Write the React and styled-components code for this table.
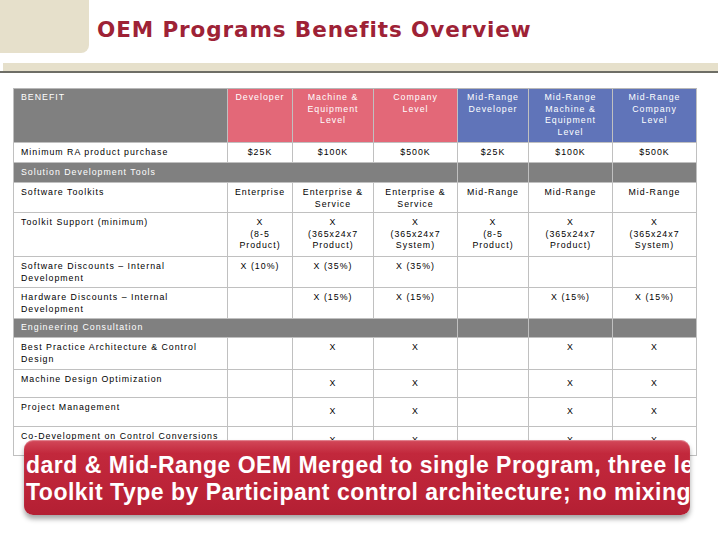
import React from 'react'
import styled, { createGlobalStyle } from 'styled-components'

const GlobalStyle = createGlobalStyle`
  body {
    margin: 0;
    background: #ffffff;
  }
`

const Page = styled.div`
  position: relative;
  width: 720px;
  height: 540px;
  overflow: hidden;
  background: #ffffff;
  font-family: "Liberation Sans", Arial, sans-serif;
`

const Header = styled.div`
  display: flex;
  height: 53px;
`

const Corner = styled.div`
  width: 89px;
  height: 53px;
  background: #e6e0cb;
  border-bottom-right-radius: 8px;
`

const Title = styled.h1`
  margin: 0;
  padding: 18px 0 0 8px;
  font-family: "DejaVu Sans", sans-serif;
  font-weight: bold;
  font-size: 21.5px;
  line-height: 23px;
  letter-spacing: 0.9px;
  color: #9e2236;
`

const Rule = styled.div`
  margin-top: 10px;
  width: 718px;
`

const RuleBand = styled.div`
  margin-left: 3px;
  height: 8px;
  background: #e6e0cb;
`

const RuleLine = styled.div`
  height: 2px;
  background: #6e6e66;
`

const Grid = styled.div`
  display: grid;
  grid-template-columns: 214px 65px 81px 84px 71px 84px 84px;
  grid-template-rows: 54px 20px 20px 30px 44px 31px 31px 19px 32px 28px 29px 29px;
  margin: 15px 0 0 13px;
  width: 684px;
  border-left: 1px solid #c0c0c0;
  border-top: 1px solid #b8b8b8;
  box-sizing: border-box;
  font-size: 8.8px;
  letter-spacing: 1px;
  line-height: 11.7px;
  color: #000000;
`

const tones = {
  plain: '#ffffff',
  gray: '#808080',
  pink: '#e36878',
  blue: '#6074b9',
}

const Cell = styled.div`
  display: flex;
  flex-direction: column;
  justify-content: ${p => (p.$middle ? 'center' : 'flex-start')};
  align-items: ${p => (p.$left ? 'flex-start' : 'center')};
  text-align: ${p => (p.$left ? 'left' : 'center')};
  padding: ${p => (p.$middle ? '0 7px' : p.$head ? '3px 7px 0' : '4px 7px 0')};
  box-sizing: border-box;
  grid-column: span ${p => p.$span || 1};
  background: ${p => tones[p.$tone || 'plain']};
  color: ${p => (p.$tone && p.$tone !== 'plain' ? '#ffffff' : '#000000')};
  border-right: 1px solid #c0c0c0;
  border-bottom: 1px solid #c0c0c0;
  overflow: hidden;
`

const Banner = styled.div`
  position: absolute;
  left: 24px;
  top: 440px;
  width: 666px;
  height: 75px;
  padding: 12px 0 0 2px;
  box-sizing: border-box;
  border-radius: 9px;
  background: linear-gradient(#d3495a 0%, #c2283c 18%, #bb2337 70%, #b31f33 100%);
  box-shadow: 0 4px 5px rgba(0, 0, 0, 0.35), inset 0 1px 1px rgba(255, 255, 255, 0.35);
  overflow: hidden;
`

const BannerLine = styled.div`
  font-family: "Liberation Sans", Arial, sans-serif;
  font-weight: bold;
  font-size: 23px;
  line-height: 27px;
  letter-spacing: 0.5px;
  color: #ffffff;
  white-space: nowrap;
`

const Lines = ({ text }) =>
  text.split('\n').map((t, i) => (
    <React.Fragment key={i}>
      {i > 0 && <br />}
      {t}
    </React.Fragment>
  ))

const columns = [
  { tone: 'pink', label: 'Developer' },
  { tone: 'pink', label: 'Machine &\nEquipment\nLevel' },
  { tone: 'pink', label: 'Company\nLevel' },
  { tone: 'blue', label: 'Mid-Range\nDeveloper' },
  { tone: 'blue', label: 'Mid-Range\nMachine &\nEquipment\nLevel' },
  { tone: 'blue', label: 'Mid-Range\nCompany\nLevel' },
]

const rows = [
  { label: 'Minimum RA product purchase', middle: true, values: ['$25K', '$100K', '$500K', '$25K', '$100K', '$500K'] },
  { section: 'Solution Development Tools' },
  { label: 'Software Toolkits', values: ['Enterprise', 'Enterprise &\nService', 'Enterprise &\nService', 'Mid-Range', 'Mid-Range', 'Mid-Range'] },
  { label: 'Toolkit Support (minimum)', values: ['X\n(8-5\nProduct)', 'X\n(365x24x7\nProduct)', 'X\n(365x24x7\nSystem)', 'X\n(8-5\nProduct)', 'X\n(365x24x7\nProduct)', 'X\n(365x24x7\nSystem)'] },
  { label: 'Software Discounts – Internal\nDevelopment', values: ['X (10%)', 'X (35%)', 'X (35%)', '', '', ''] },
  { label: 'Hardware Discounts – Internal\nDevelopment', values: ['', 'X (15%)', 'X (15%)', '', 'X (15%)', 'X (15%)'] },
  { section: 'Engineering Consultation' },
  { label: 'Best Practice Architecture  & Control\nDesign', values: ['', 'X', 'X', '', 'X', 'X'] },
  { label: 'Machine Design Optimization', valuesMiddle: true, values: ['', 'X', 'X', '', 'X', 'X'] },
  { label: 'Project Management', valuesMiddle: true, values: ['', 'X', 'X', '', 'X', 'X'] },
  { label: 'Co-Development on Control Conversions', valuesMiddle: true, values: ['', 'X', 'X', '', 'X', 'X'] },
]

export default function App() {
  return (
    <Page>
      <GlobalStyle />
      <Header>
        <Corner />
        <Title>OEM Programs Benefits Overview</Title>
      </Header>
      <Rule>
        <RuleBand />
        <RuleLine />
      </Rule>

      <Grid>
        <Cell $tone="gray" $left $head>BENEFIT</Cell>
        {columns.map((c, i) => (
          <Cell key={i} $tone={c.tone} $head>
            <Lines text={c.label} />
          </Cell>
        ))}

        {rows.map((r, i) =>
          r.section ? (
            <React.Fragment key={i}>
              <Cell $tone="gray" $left $middle $span={4}>{r.section}</Cell>
              <Cell $tone="gray" />
              <Cell $tone="gray" />
              <Cell $tone="gray" />
            </React.Fragment>
          ) : (
            <React.Fragment key={i}>
              <Cell $left $middle={r.middle}>
                <Lines text={r.label} />
              </Cell>
              {r.values.map((v, j) => (
                <Cell key={j} $middle={r.middle || r.valuesMiddle}>
                  <Lines text={v} />
                </Cell>
              ))}
            </React.Fragment>
          )
        )}
      </Grid>

      <Banner>
        <BannerLine>dard &amp; Mid-Range OEM Merged to single Program, three le</BannerLine>
        <BannerLine>Toolkit Type by Participant control architecture; no mixing</BannerLine>
      </Banner>
    </Page>
  )
}
